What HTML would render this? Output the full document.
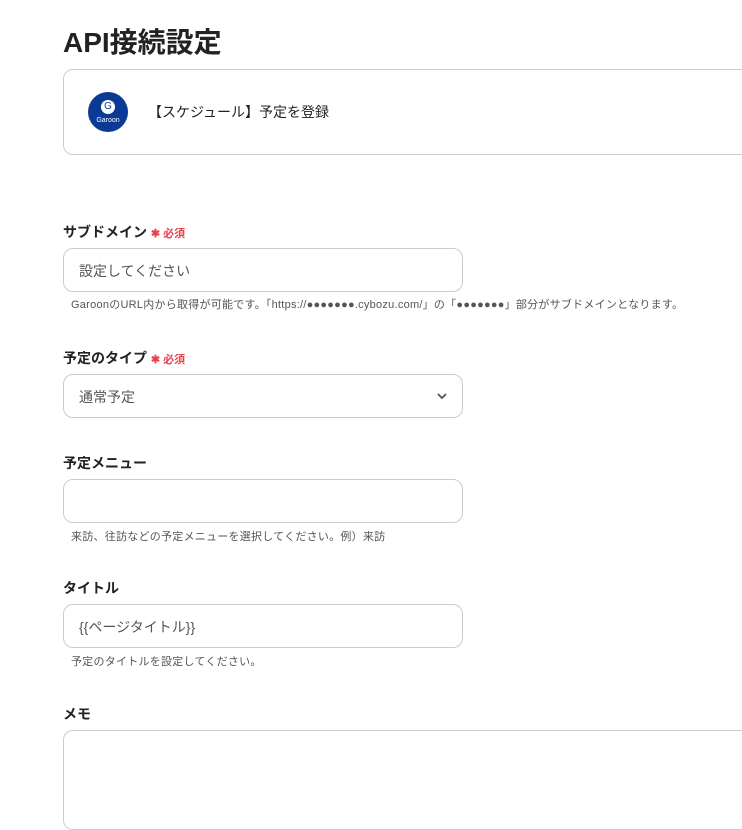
<!DOCTYPE html>
<html><head><meta charset="utf-8"><style>
*{box-sizing:border-box;margin:0;padding:0}
body{width:742px;height:796px;overflow:hidden;background:#fff;font-family:"Liberation Sans","Noto Sans CJK JP",sans-serif;color:#333;position:relative}
.abs{position:absolute}
h1{position:absolute;left:63px;top:21px;font-size:28px;font-weight:bold;color:#222}
.card{left:63px;top:69px;width:700px;height:86px;border:1px solid #ccc;border-radius:10px}
.logo{left:88px;top:92px;width:40px;height:40px;border-radius:50%;background:#0a3a96;color:#fff}
.lbl{font-size:14px;font-weight:bold;color:#222}
.req{color:#e8424f;font-size:11px;font-weight:bold}
.inp{width:400px;height:44px;border:1px solid #ccc;border-radius:10px;font-size:14px;color:#555;padding:12px 0 0 15px}
.hint{font-size:11px;color:#555;letter-spacing:0.25px}
</style></head><body>
<h1>API接続設定</h1>
<div class="abs card"></div>
<div class="abs logo"><div class="abs" style="left:13px;top:8px;width:14px;height:14px;border-radius:50%;background:#fff;color:#0a3a96;font-size:10px;text-align:center;line-height:14px">G</div><div class="abs" style="left:0;top:25px;width:40px;text-align:center;font-size:7px">Garoon</div></div>
<div class="abs" style="left:148px;top:102px;font-size:14px;color:#222">【スケジュール】予定を登録</div>

<div class="abs lbl" style="left:63px;top:222px">サブドメイン <span class="req">✱ 必須</span></div>
<div class="abs inp" style="left:63px;top:248px">設定してください</div>
<div class="abs hint" style="left:71px;top:296px">GaroonのURL内から取得が可能です。「https://●●●●●●●.cybozu.com/」の「●●●●●●●」部分がサブドメインとなります。</div>

<div class="abs lbl" style="left:63px;top:348px">予定のタイプ <span class="req">✱ 必須</span></div>
<div class="abs inp" style="left:63px;top:374px">通常予定</div>
<svg class="abs" style="left:436px;top:391px" width="12" height="10" viewBox="0 0 12 10"><path d="M2 3l4 4 4-4" stroke="#555" stroke-width="1.8" fill="none"/></svg>

<div class="abs lbl" style="left:63px;top:453px">予定メニュー</div>
<div class="abs inp" style="left:63px;top:479px"></div>
<div class="abs hint" style="left:71px;top:528px">来訪、往訪などの予定メニューを選択してください。例）来訪</div>

<div class="abs lbl" style="left:63px;top:578px">タイトル</div>
<div class="abs inp" style="left:63px;top:604px">{{ページタイトル}}</div>
<div class="abs hint" style="left:71px;top:653px">予定のタイトルを設定してください。</div>

<div class="abs lbl" style="left:63px;top:704px">メモ</div>
<div class="abs" style="left:63px;top:730px;width:700px;height:100px;border:1px solid #ccc;border-radius:10px"></div>
</body></html>
